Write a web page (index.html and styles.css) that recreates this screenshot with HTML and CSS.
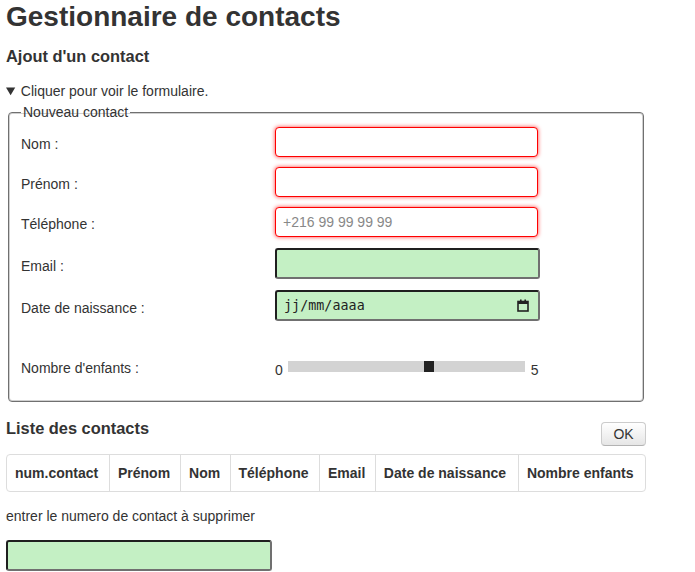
FILE: index.html
```html
<!DOCTYPE html>
<html lang="fr">
<head>
<meta charset="utf-8">
<title>Gestionnaire de contacts</title>
<link rel="stylesheet" href="styles.css">
</head>
<body>
<div class="page">
  <h1 class="title">Gestionnaire de contacts</h1>
  <h2 class="sub">Ajout d'un contact</h2>
  <details class="form-details" open>
    <summary class="summary">Cliquer pour voir le formulaire.</summary>
    <fieldset class="box">
      <legend class="legend">Nouveau contact</legend>
      <div class="row">
        <label class="lbl">Nom :</label>
        <input class="inp inp-bad" type="text">
      </div>
      <div class="row">
        <label class="lbl">Prénom :</label>
        <input class="inp inp-bad" type="text">
      </div>
      <div class="row">
        <label class="lbl">Téléphone :</label>
        <input class="inp inp-bad" type="text" placeholder="+216 99 99 99 99">
      </div>
      <div class="row row-ok">
        <label class="lbl">Email :</label>
        <input class="inp inp-ok" type="text">
      </div>
      <div class="row row-ok">
        <label class="lbl">Date de naissance :</label>
        <div class="inp inp-ok date">
          <span class="date-text">jj/mm/aaaa</span>
          <svg class="cal" width="12" height="13" viewBox="0 0 12 13">
            <rect x="1" y="2.5" width="10" height="9.5" fill="none" stroke="#222" stroke-width="1.6"/>
            <rect x="1" y="2" width="10" height="3" fill="#222"/>
            <rect x="3" y="0.5" width="1.6" height="2" fill="#222"/>
            <rect x="7.4" y="0.5" width="1.6" height="2" fill="#222"/>
          </svg>
        </div>
      </div>
      <div class="row row-range">
        <label class="lbl">Nombre d'enfants :</label>
        <div class="range-wrap">
          <span class="range-num">0</span>
          <input class="range" type="range" min="0" max="5" value="3">
          <span class="range-num">5</span>
        </div>
      </div>
    </fieldset>
  </details>
  <div class="list-head">
    <h2 class="sub">Liste des contacts</h2>
    <button class="btn" type="button">OK</button>
  </div>
  <table class="tbl">
    <thead>
      <tr>
        <th>num.contact</th>
        <th>Prénom</th>
        <th>Nom</th>
        <th>Téléphone</th>
        <th>Email</th>
        <th>Date de naissance</th>
        <th>Nombre enfants</th>
      </tr>
    </thead>
  </table>
  <p class="hint">entrer le numero de contact à supprimer</p>
  <input class="inp inp-ok inp-del" type="text">
</div>
</body>
</html>
```
FILE: styles.css
```css
html, body {
  margin: 0;
  padding: 0;
  background: #fff;
}
body {
  font-family: "Liberation Sans", Arial, sans-serif;
  font-size: 14px;
  line-height: 20px;
  color: #333;
}
.page {
  width: 640px;
  margin-left: 6px;
}
.title {
  font-size: 28px;
  line-height: 32px;
  font-weight: bold;
  margin: 0;
  padding-top: 1px;
}
.sub {
  font-size: 16.4px;
  line-height: 20px;
  font-weight: bold;
  margin: 13px 0 0 0;
}
.form-details {
  margin-top: 15px;
}
.summary {
  cursor: pointer;
}
.box {
  margin: 1px 2px 0 2px;
  padding: 5px 12px 20px 12px;
  border: 1px solid #707070;
  box-shadow: inset 0 0 0 1px #d0d0d0;
  border-radius: 4px;
}
.legend {
  padding: 0 2px;
  font-size: 14px;
  line-height: 20px;
}
.row {
  display: grid;
  grid-template-columns: 254px auto;
  align-items: center;
  margin-bottom: 10px;
}
.row-ok {
  margin-top: 11px;
}
.lbl {
  font-size: 14px;
  padding-top: 4px;
}
.inp {
  box-sizing: border-box;
  font-family: "Liberation Sans", Arial, sans-serif;
  font-size: 14px;
  margin: 0;
  outline: none;
}
.inp-bad {
  width: 263px;
  height: 30px;
  border: 1px solid #ff0000;
  border-radius: 4px;
  box-shadow: 0 0 4px rgba(255, 0, 0, 0.75);
  background: #fff;
  padding: 0 7px;
  color: #333;
}
.inp-bad::placeholder {
  color: #888;
}
.inp-ok {
  width: 265px;
  height: 31px;
  background: #c4f0c4;
  border-style: solid;
  border-width: 2px;
  border-color: #1f1f1f #707070 #707070 #1f1f1f;
  border-radius: 3px;
}
.date {
  display: flex;
  align-items: center;
  justify-content: space-between;
  padding: 0 9px 0 7px;
}
.date-text {
  font-family: "DejaVu Sans Mono", "Liberation Mono", monospace;
  font-size: 13.33px;
  color: #222;
  letter-spacing: 0.05px;
}
.cal {
  display: block;
}
.row-range {
  margin-top: 30px;
  margin-bottom: 0;
  height: 30px;
}
.range-wrap {
  display: flex;
  align-items: center;
}
.range-num {
  font-size: 14px;
  line-height: 16px;
  margin-top: 7px;
}
.range {
  -webkit-appearance: none;
  appearance: none;
  width: 237px;
  height: 11px;
  margin: 0 6px 0 5px;
  background: #d3d3d3;
  outline: none;
}
.range::-webkit-slider-thumb {
  -webkit-appearance: none;
  appearance: none;
  width: 10px;
  height: 11px;
  background: #222;
  border: none;
  cursor: pointer;
}
.list-head {
  display: flex;
  justify-content: space-between;
  align-items: flex-start;
  margin-top: 16px;
}
.list-head .sub {
  margin: 0;
}
.btn {
  margin-top: 4px;
  width: 45px;
  height: 24px;
  padding: 0;
  font-family: "Liberation Sans", Arial, sans-serif;
  font-size: 14px;
  color: #333;
  background: linear-gradient(#ffffff, #e6e6e6);
  border: 1px solid #cccccc;
  border-bottom-color: #b3b3b3;
  border-radius: 4px;
}
.tbl {
  margin-top: 8px;
  width: 640px;
  border-collapse: separate;
  border-spacing: 0;
  border: 1px solid #dddddd;
  border-radius: 4px;
}
.tbl th {
  padding: 8px;
  font-weight: bold;
  font-size: 14px;
  line-height: 20px;
  text-align: left;
  border-left: 1px solid #dddddd;
  white-space: nowrap;
}
.tbl th:first-child {
  border-left: none;
}
.hint {
  margin: 14px 0 0 0;
}
.inp-del {
  display: block;
  margin-top: 14px;
  width: 266px;
}
```
